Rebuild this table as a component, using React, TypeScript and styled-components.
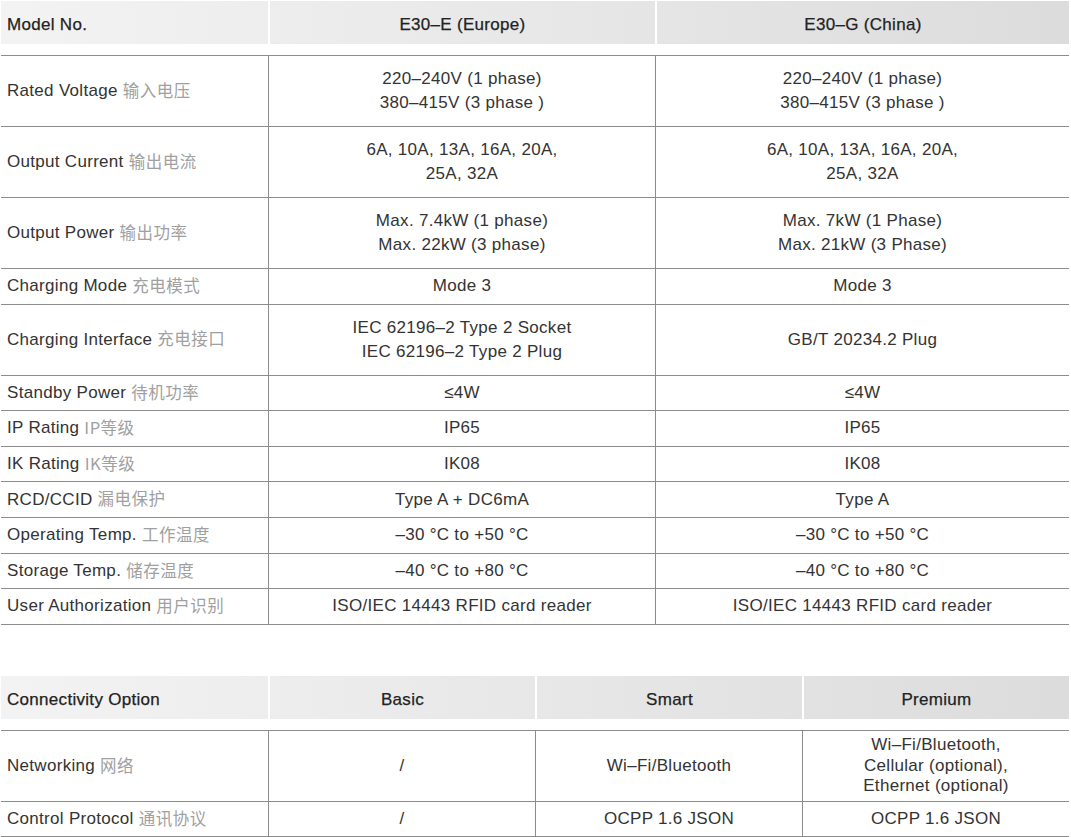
import React from 'react'
import styled, { createGlobalStyle } from 'styled-components'

const GlobalStyle = createGlobalStyle`
  body {
    margin: 0;
    background: #ffffff;
    font-family: 'Liberation Sans', Arial, 'Noto Sans CJK SC', sans-serif;
    color: #333333;
  }
`

const Page = styled.div`
  width: 1068px;
  padding: 1px 0 0 1px;
  display: flex;
  flex-direction: column;
  gap: 51px;
`

const Table = styled.div`
  display: flex;
  flex-direction: column;
`

const HeadRow = styled.div<{ cols: string }>`
  display: grid;
  grid-template-columns: ${({ cols }) => cols};
  height: 43px;
  background: linear-gradient(to right, #f3f3f3, #dcdcdc);
`

const HeadCell = styled.div<{ first?: boolean }>`
  display: flex;
  align-items: center;
  justify-content: ${({ first }) => (first ? 'flex-start' : 'center')};
  padding-top: 5px;
  padding-left: ${({ first }) => (first ? '6px' : '0')};
  border-left: ${({ first }) => (first ? 'none' : '2px solid #ffffff')};
  font-size: 17px;
  letter-spacing: 0.3px;
  color: #222222;
  -webkit-text-stroke: 0.25px #222222;
`

const Body = styled.div`
  margin-top: 11px;
  border-top: 1px solid #8c8c8c;
`

const Row = styled.div<{ cols: string; tall?: boolean }>`
  display: grid;
  grid-template-columns: ${({ cols }) => cols};
  height: ${({ tall }) => (tall ? '70px' : '34.6px')};
  border-bottom: 1px solid #8c8c8c;
`

const Label = styled.div`
  display: flex;
  align-items: center;
  padding-left: 6px;
  font-size: 17px;
  letter-spacing: 0.3px;
  color: #333333;
  white-space: nowrap;
`

const Zh = styled.span`
  color: #a0a0a0;
  margin-left: 5px;
  font-family: 'Noto Sans CJK SC', sans-serif;
  font-size: 16.5px;
  letter-spacing: 0.5px;
  line-height: 1;
  margin-bottom: 2px;
`

const Value = styled.div<{ dense?: boolean }>`
  display: flex;
  flex-direction: column;
  align-items: center;
  justify-content: center;
  border-left: 1px solid #8c8c8c;
  font-size: 17px;
  letter-spacing: 0.3px;
  line-height: ${({ dense }) => (dense ? '20.5px' : '24px')};
  color: #333333;
  text-align: center;
`

type Spec = { en: string; zh: string; values: string[][]; tall?: boolean }

const mainCols = '267px 387px 414px'
const connCols = '267px 267px 267px 267px'

const mainSpecs: Spec[] = [
  {
    en: 'Rated Voltage',
    zh: '输入电压',
    tall: true,
    values: [
      ['220–240V (1 phase)', '380–415V (3 phase )'],
      ['220–240V (1 phase)', '380–415V (3 phase )'],
    ],
  },
  {
    en: 'Output Current',
    zh: '输出电流',
    tall: true,
    values: [
      ['6A, 10A, 13A, 16A, 20A,', '25A, 32A'],
      ['6A, 10A, 13A, 16A, 20A,', '25A, 32A'],
    ],
  },
  {
    en: 'Output Power',
    zh: '输出功率',
    tall: true,
    values: [
      ['Max. 7.4kW (1 phase)', 'Max. 22kW (3 phase)'],
      ['Max. 7kW (1 Phase)', 'Max. 21kW (3 Phase)'],
    ],
  },
  { en: 'Charging Mode', zh: '充电模式', values: [['Mode 3'], ['Mode 3']] },
  {
    en: 'Charging Interface',
    zh: '充电接口',
    tall: true,
    values: [['IEC 62196–2 Type 2 Socket', 'IEC 62196–2 Type 2 Plug'], ['GB/T 20234.2 Plug']],
  },
  { en: 'Standby Power', zh: '待机功率', values: [['≤4W'], ['≤4W']] },
  { en: 'IP Rating', zh: 'IP等级', values: [['IP65'], ['IP65']] },
  { en: 'IK Rating', zh: 'IK等级', values: [['IK08'], ['IK08']] },
  { en: 'RCD/CCID', zh: '漏电保护', values: [['Type A + DC6mA'], ['Type A']] },
  { en: 'Operating Temp.', zh: '工作温度', values: [['–30 °C to +50 °C'], ['–30 °C to +50 °C']] },
  { en: 'Storage Temp.', zh: '储存温度', values: [['–40 °C to +80 °C'], ['–40 °C to +80 °C']] },
  {
    en: 'User Authorization',
    zh: '用户识别',
    values: [['ISO/IEC 14443 RFID card reader'], ['ISO/IEC 14443 RFID card reader']],
  },
]

const connSpecs: Spec[] = [
  {
    en: 'Networking',
    zh: '网络',
    tall: true,
    values: [
      ['/'],
      ['Wi–Fi/Bluetooth'],
      ['Wi–Fi/Bluetooth,', 'Cellular (optional),', 'Ethernet (optional)'],
    ],
  },
  { en: 'Control Protocol', zh: '通讯协议', values: [['/'], ['OCPP 1.6 JSON'], ['OCPP 1.6 JSON']] },
]

const SpecTable: React.FC<{ cols: string; heads: string[]; specs: Spec[] }> = ({ cols, heads, specs }) => (
  <Table>
    <HeadRow cols={cols}>
      {heads.map((h, i) => (
        <HeadCell key={h} first={i === 0}>
          {h}
        </HeadCell>
      ))}
    </HeadRow>
    <Body>
      {specs.map((s) => (
        <Row key={s.en} cols={cols} tall={s.tall}>
          <Label>
            {s.en}
            <Zh>{s.zh}</Zh>
          </Label>
          {s.values.map((lines, i) => (
            <Value key={i} dense={lines.length > 2}>
              {lines.map((l) => (
                <span key={l}>{l}</span>
              ))}
            </Value>
          ))}
        </Row>
      ))}
    </Body>
  </Table>
)

export default function App() {
  return (
    <Page>
      <GlobalStyle />
      <SpecTable cols={mainCols} heads={['Model No.', 'E30–E (Europe)', 'E30–G (China)']} specs={mainSpecs} />
      <SpecTable cols={connCols} heads={['Connectivity Option', 'Basic', 'Smart', 'Premium']} specs={connSpecs} />
    </Page>
  )
}
